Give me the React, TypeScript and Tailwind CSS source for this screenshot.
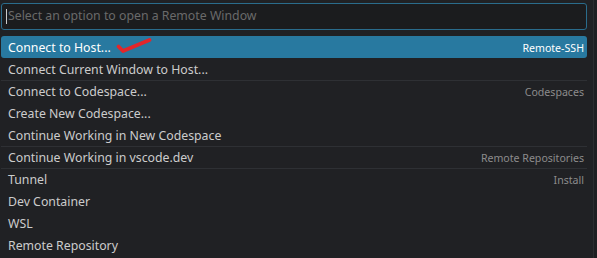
import React from "react";

type Item = { label: string; desc?: string; sep?: boolean; active?: boolean };

const items: Item[] = [
  { label: "Connect to Host...", desc: "Remote-SSH", active: true },
  { label: "Connect Current Window to Host..." },
  { label: "Connect to Codespace...", desc: "Codespaces", sep: true },
  { label: "Create New Codespace..." },
  { label: "Continue Working in New Codespace" },
  { label: "Continue Working in vscode.dev", desc: "Remote Repositories", sep: true },
  { label: "Tunnel", desc: "Install", sep: true },
  { label: "Dev Container" },
  { label: "WSL" },
  { label: "Remote Repository" },
];

const Row = ({ item }: { item: Item }) => {
  return (
    <div
      className={
        "relative flex h-[22px] items-center justify-between pl-[7px] pr-[3px] pt-[2px] " +
        (item.sep ? "border-t border-[#2e3034] " : "") +
        (item.active ? "rounded-[3px] bg-[#2879a0] text-white" : "text-[#cccccc]")
      }
    >
      <span className="text-[12.3px] leading-none">{item.label}</span>
      {item.active && (
        <svg className="absolute left-[114px] top-[1px]" width="38" height="18" viewBox="0 0 38 18">
          <path d="M3.5 9.5 L8 14 L34.5 3" fill="none" stroke="#e3262a" strokeWidth="3.8" strokeLinecap="round" strokeLinejoin="round" />
        </svg>
      )}
      <span className={"text-[10.6px] leading-none " + (item.active ? "text-white" : "text-[#8c8c8c]")}>{item.desc}</span>
    </div>
  );
};

export default function App() {
  return (
    <div className="flex h-[258px] w-[597px] bg-[#202124] font-['Noto_Sans',sans-serif]">
      <div className="flex w-[587px] flex-col pl-[1px] pt-[3px]">
        <div className="flex h-[27px] items-center rounded-[3px] border border-[#2a6c8c] bg-[#1b1c1e] pl-[4px]">
          <span className="mr-[1px] h-[15px] w-[1px] bg-[#cccccc]" />
          <span className="text-[12.3px] leading-none text-[#6a6a6a]">Select an option to open a Remote Window</span>
        </div>
        <div className="mt-[6px] flex flex-col">
          {items.map((it) => (
            <Row key={it.label} item={it} />
          ))}
        </div>
      </div>
      <div className="ml-[6px] w-[4px] border-l border-[#2c2d30] bg-[#1e1f22]" />
    </div>
  );
}
